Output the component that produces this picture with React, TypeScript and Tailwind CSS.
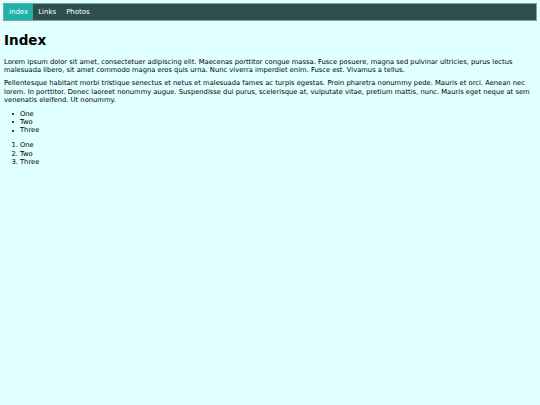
export default function App() {
  const bullets = ["One", "Two", "Three"];
  return (
    <div className="min-h-[405px] w-full bg-[#e0ffff] p-[3px] text-black" style={{ fontFamily: '"DejaVu Sans", Verdana, sans-serif' }}>
      <nav className="flex h-[18px] items-stretch border border-[#7fa3a3] bg-[#2f4f4f] text-[7px] text-white">
        <a className="flex items-center bg-[#20b2aa] px-[5px]">index</a>
        <a className="flex items-center px-[5px]">Links</a>
        <a className="flex items-center px-[5px]">Photos</a>
      </nav>
      <div className="px-px text-[6.75px] leading-[8.4px]">
        <h1 className="mt-[11px] mb-[10px] text-[13.5px] font-bold leading-[16px]">Index</h1>
        <p className="mb-[4.5px]">
          Lorem ipsum dolor sit amet, consectetuer adipiscing elit. Maecenas porttitor congue massa. Fusce posuere, magna sed pulvinar ultricies, purus lectus malesuada libero, sit amet commodo magna eros quis urna. Nunc viverra imperdiet enim. Fusce est. Vivamus a tellus.
        </p>
        <p className="mb-[5px]">
          Pellentesque habitant morbi tristique senectus et netus et malesuada fames ac turpis egestas. Proin pharetra nonummy pede. Mauris et orci. Aenean nec lorem. In porttitor. Donec laoreet nonummy augue. Suspendisse dui purus, scelerisque at, vulputate vitae, pretium mattis, nunc. Mauris eget neque at sem venenatis eleifend. Ut nonummy.
        </p>
        <ul className="mb-[6.5px] list-none pl-[8px]">
          {bullets.map((b) => (
            <li key={b} className="flex items-center">
              <span className="flex w-[8px] items-center">
                <span className="block h-[2px] w-[2px] rounded-full bg-black" />
              </span>
              <span>{b}</span>
            </li>
          ))}
        </ul>
        <ol className="list-none">
          {bullets.map((b, i) => (
            <li key={b} className="flex">
              <span className="w-[16px] pr-[2px] text-right">{i + 1}.</span>
              <span>{b}</span>
            </li>
          ))}
        </ol>
      </div>
    </div>
  );
}
